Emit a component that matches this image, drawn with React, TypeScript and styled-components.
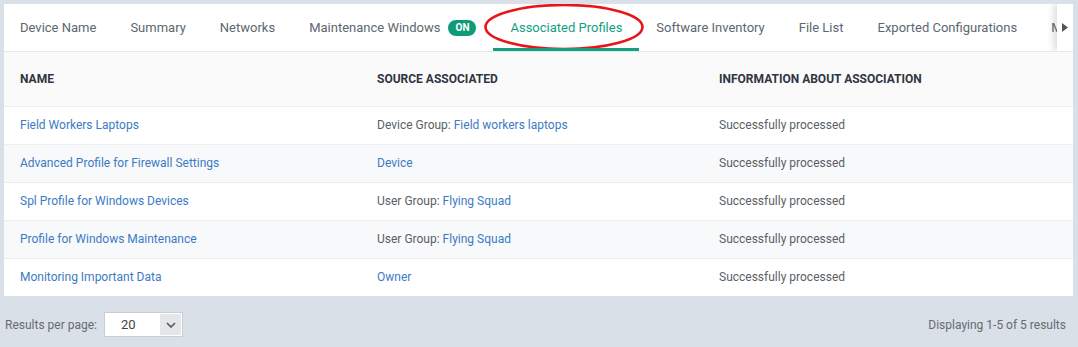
import React from 'react'
import styled, { createGlobalStyle } from 'styled-components'

const GlobalStyle = createGlobalStyle`
  body {
    margin: 0;
    background: #d9e0e7;
    font-family: Roboto, "Liberation Sans", Arial, sans-serif;
  }
`

interface IProfile {
  name: string
  sourceLabel?: string
  source: string
  info: string
}

const tabs = [
  'Device Name',
  'Summary',
  'Networks',
  'Maintenance Windows',
  'Associated Profiles',
  'Software Inventory',
  'File List',
  'Exported Configurations',
  'Mobile',
]

const profiles: IProfile[] = [
  { name: 'Field Workers Laptops', sourceLabel: 'Device Group:', source: 'Field workers laptops', info: 'Successfully processed' },
  { name: 'Advanced Profile for Firewall Settings', source: 'Device', info: 'Successfully processed' },
  { name: 'Spl Profile for Windows Devices', sourceLabel: 'User Group:', source: 'Flying Squad', info: 'Successfully processed' },
  { name: 'Profile for Windows Maintenance', sourceLabel: 'User Group:', source: 'Flying Squad', info: 'Successfully processed' },
  { name: 'Monitoring Important Data', source: 'Owner', info: 'Successfully processed' },
]

const App = () => {
  return (
    <Page>
      <GlobalStyle />
      <Panel>
        <TabBar>
          <TabList>
            {tabs.map((tab) => (
              <Tab key={tab} active={tab === 'Associated Profiles'}>
                {tab}
                {tab === 'Maintenance Windows' && <Badge>ON</Badge>}
                {tab === 'Associated Profiles' && (
                  <Circle viewBox="0 0 164 50">
                    <ellipse cx="81" cy="24" rx="78.5" ry="22" />
                  </Circle>
                )}
              </Tab>
            ))}
          </TabList>
          <ScrollButton>
            <svg width="6" height="9" viewBox="0 0 6 9">
              <path d="M0 0 L6 4.5 L0 9 Z" fill="#555" />
            </svg>
          </ScrollButton>
        </TabBar>
        <Table>
          <colgroup>
            <col style={{ width: 357 }} />
            <col style={{ width: 342 }} />
            <col />
          </colgroup>
          <thead>
            <tr>
              <HeadCell>Name</HeadCell>
              <HeadCell>Source Associated</HeadCell>
              <HeadCell>Information About Association</HeadCell>
            </tr>
          </thead>
          <tbody>
            {profiles.map((p, i) => (
              <Row key={p.name} striped={i % 2 === 1}>
                <Cell>
                  <Link>{p.name}</Link>
                </Cell>
                <Cell>
                  {p.sourceLabel && <>{p.sourceLabel} </>}
                  <Link>{p.source}</Link>
                </Cell>
                <Cell>{p.info}</Cell>
              </Row>
            ))}
          </tbody>
        </Table>
      </Panel>
      <Footer>
        <PerPage>
          Results per page:
          <Select>
            <SelectValue>20</SelectValue>
            <SelectButton>
              <svg width="10" height="6" viewBox="0 0 10 6">
                <path d="M1 1 L5 5 L9 1" fill="none" stroke="#555" strokeWidth="1.6" />
              </svg>
            </SelectButton>
          </Select>
        </PerPage>
        <Summary>Displaying 1-5 of 5 results</Summary>
      </Footer>
    </Page>
  )
}

const Page = styled.div`
  width: 1078px;
  height: 347px;
  padding: 4px 5px 0 4px;
  box-sizing: border-box;
`

const Panel = styled.div`
  background: #fff;
`

const TabBar = styled.div`
  display: flex;
  height: 47px;
  border-bottom: 1px solid #e6e8eb;
  overflow: hidden;
`

const TabList = styled.div`
  flex: 1;
  display: flex;
  margin-left: -1px;
  overflow: hidden;
`

const Tab = styled.div<{ active?: boolean }>`
  position: relative;
  display: flex;
  align-items: center;
  flex-shrink: 0;
  padding: 0 17px;
  font-size: 13px;
  color: ${({ active }) => (active ? '#13a07e' : '#5d6770')};
  white-space: nowrap;
  &:after {
    content: '';
    display: ${({ active }) => (active ? 'block' : 'none')};
    position: absolute;
    left: 0;
    right: 0;
    bottom: 0;
    height: 3px;
    background: #13a07e;
  }
`

const Circle = styled.svg`
  position: absolute;
  left: -10px;
  top: -1px;
  width: 164px;
  height: 50px;
  ellipse {
    fill: none;
    stroke: #e8141a;
    stroke-width: 2.6;
  }
`

const Badge = styled.span`
  margin-left: 8px;
  padding: 0 7px;
  height: 16px;
  line-height: 16px;
  border-radius: 8px;
  background: #0f9b77;
  color: #fff;
  font-size: 10px;
  font-weight: 700;
`

const ScrollButton = styled.div`
  width: 16px;
  display: flex;
  align-items: center;
  justify-content: center;
  background: #fff;
  box-shadow: -4px 0 6px rgba(0, 0, 0, 0.12);
  position: relative;
`

const Table = styled.table`
  width: 100%;
  table-layout: fixed;
  border-collapse: collapse;
  font-size: 12px;
`

const HeadCell = styled.th`
  height: 54px;
  padding: 0 16px;
  background: #fafafa;
  text-align: left;
  text-transform: uppercase;
  font-weight: 700;
  color: #2f3541;
  border-bottom: 1px solid #eceef0;
  box-sizing: border-box;
`

const Row = styled.tr<{ striped?: boolean }>`
  background: ${({ striped }) => (striped ? '#f8f9fb' : '#fff')};
`

const Cell = styled.td`
  height: 38px;
  padding: 0 16px;
  color: #5a5f66;
  border-bottom: 1px solid #eceef0;
  box-sizing: border-box;
  white-space: nowrap;
  ${Row}:last-child & {
    border-bottom: none;
  }
`

const Link = styled.span`
  color: #3c7bc3;
`

const Footer = styled.div`
  display: flex;
  justify-content: space-between;
  align-items: center;
  padding: 16px 7px 0 1px;
  font-size: 12px;
  color: #666b72;
`

const PerPage = styled.div`
  display: flex;
  align-items: center;
  gap: 7px;
`

const Select = styled.div`
  display: flex;
  width: 77px;
  height: 23px;
  border: 1px solid #c9cdd2;
  background: #fff;
`

const SelectValue = styled.div`
  flex: 1;
  display: flex;
  align-items: center;
  padding-left: 16px;
  font-size: 13px;
  color: #444;
`

const SelectButton = styled.div`
  width: 21px;
  display: flex;
  align-items: center;
  justify-content: center;
  background: #e4e7ea;
  margin: 1px;
`

const Summary = styled.div``

export default App
